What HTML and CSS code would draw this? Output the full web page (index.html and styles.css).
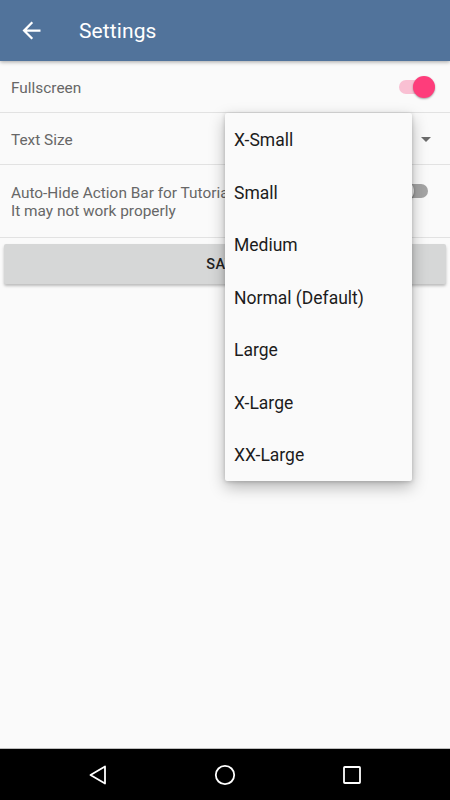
FILE: index.html
```html
<!DOCTYPE html>
<html>
<head>
<meta charset="utf-8">
<link rel="stylesheet" href="styles.css">
</head>
<body>
<div class="screen">
  <header class="appbar">
    <svg class="back" width="27" height="27" viewBox="0 0 24 24"><path d="M20 11H7.83l5.59-5.59L12 4l-8 8 8 8 1.41-1.41L7.83 13H20v-2z" fill="#fff"/></svg>
    <span class="title">Settings</span>
  </header>
  <main class="content">
    <div class="row">
      <span class="label">Fullscreen</span>
      <span class="switch on"><span class="track"></span><span class="thumb"></span></span>
    </div>
    <div class="row">
      <span class="label">Text Size</span>
      <span class="caret"></span>
    </div>
    <div class="row row-tall">
      <span class="label two">Auto-Hide Action Bar for Tutorial<br>It may not work properly</span>
      <span class="switch off top"><span class="track"></span><span class="thumb"></span></span>
    </div>
    <div class="btn-wrap"><button class="btn">SAVE</button></div>

    <ul class="menu">
      <li>X-Small</li>
      <li>Small</li>
      <li>Medium</li>
      <li>Normal (Default)</li>
      <li>Large</li>
      <li>X-Large</li>
      <li>XX-Large</li>
    </ul>
  </main>
  <nav class="navbar">
    <svg width="20" height="20" viewBox="0 0 20 20"><path d="M17 1.5 L2.5 10 L17 18.5 Z" fill="none" stroke="#fff" stroke-width="1.8" stroke-linejoin="round"/></svg>
    <svg width="22" height="22" viewBox="0 0 22 22"><circle cx="11" cy="11" r="9.2" fill="none" stroke="#fff" stroke-width="1.8"/></svg>
    <svg width="20" height="20" viewBox="0 0 20 20"><rect x="2" y="2" width="16" height="16" rx="0.8" fill="none" stroke="#fff" stroke-width="1.8"/></svg>
  </nav>
</div>
</body>
</html>
```
FILE: styles.css
```css
* { box-sizing: border-box; }
html, body { margin: 0; padding: 0; }
body {
  font-family: Roboto, "Noto Sans", sans-serif;
  background: #fafafa;
}
.screen {
  width: 450px;
  height: 800px;
  display: flex;
  flex-direction: column;
  overflow: hidden;
}
.appbar {
  height: 61px;
  flex: none;
  background: #51739b;
  display: flex;
  align-items: center;
  padding-left: 18px;
  box-shadow: 0 1px 4px rgba(0,0,0,0.35);
  position: relative;
  z-index: 2;
}
.back { display: block; }
.title {
  color: #fff;
  font-size: 21px;
  margin-left: 34px;
  letter-spacing: 0.1px;
}
.content {
  flex: 1;
  position: relative;
  background: #fafafa;
}
.row {
  height: 52px;
  display: flex;
  align-items: center;
  justify-content: space-between;
  padding: 0 11px;
  border-bottom: 1px solid #e2e2e2;
}
.row-tall { height: 73px; }
.label {
  color: #676767;
  font-size: 15.4px;
  padding-top: 3px;
}
.label.two { line-height: 18px; white-space: nowrap; padding-top: 2px; }
.caret {
  width: 0; height: 0;
  border-left: 5px solid transparent;
  border-right: 5px solid transparent;
  border-top: 5px solid #6b6b6b;
  margin-right: 8px;
  margin-top: 1px;
}
.switch {
  position: relative;
  width: 50px;
  height: 24px;
  flex: none;
}
.switch.top { align-self: flex-start; margin-top: 14px; }
.switch .track {
  position: absolute;
  left: 10px; right: 11px;
  top: 5px; height: 14px;
  border-radius: 7px;
}
.switch .thumb {
  position: absolute;
  top: 1px;
  width: 22px; height: 22px;
  border-radius: 50%;
  box-shadow: 0 1px 2px rgba(0,0,0,0.35);
}
.switch.on .track { background: #f9c0d3; }
.switch.on .thumb { right: 4px; background: #fe3d7b; }
.switch.off .track { background: #a4a4a4; }
.switch.off .thumb { left: 3px; background: #ececec; }
.btn-wrap { padding: 6px 4px; }
.btn {
  width: 100%;
  height: 40px;
  border: none;
  border-radius: 2px;
  background: #d6d7d7;
  color: #222;
  font-family: Roboto, sans-serif;
  font-size: 14.5px;
  font-weight: 500;
  letter-spacing: 0.5px;
  box-shadow: 0 2px 3px rgba(0,0,0,0.25);
}
.menu {
  position: absolute;
  left: 225px;
  top: 52px;
  width: 187px;
  margin: 0;
  padding: 0;
  list-style: none;
  background: #fafafa;
  border-radius: 2px;
  box-shadow: 0 6px 16px rgba(0,0,0,0.28), 0 1px 4px rgba(0,0,0,0.18);
  z-index: 3;
}
.menu li {
  height: 52.5px;
  display: flex;
  align-items: center;
  padding-left: 9px;
  padding-top: 2px;
  font-size: 17.5px;
  color: #1c1c1c;
}
.navbar {
  height: 52px;
  flex: none;
  background: #000;
  display: flex;
  align-items: center;
  justify-content: center;
  gap: 106px;
  border-top: 1px solid #bdbdbd;
}
.navbar svg { display: block; }
```
